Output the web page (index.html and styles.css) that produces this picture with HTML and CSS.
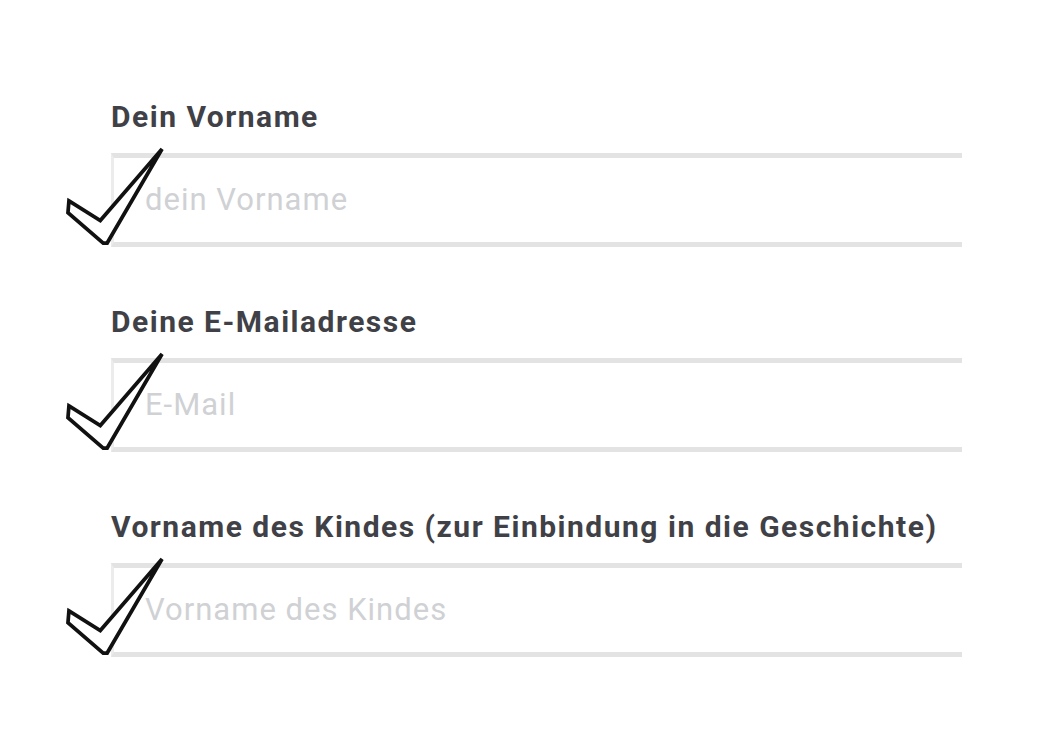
FILE: index.html
```html
<!DOCTYPE html>
<html lang="de">
<head>
<meta charset="utf-8">
<title>Anmeldung</title>
<link rel="stylesheet" href="styles.css">
</head>
<body>
<form class="signup">
  <div class="field">
    <label class="field-label" for="vorname">Dein Vorname</label>
    <div class="input-wrap">
      <input class="field-input" id="vorname" type="text" placeholder="dein Vorname">
      <svg class="check" viewBox="0 0 100 100" aria-hidden="true">
        <path d="M3 54 L35 74 L98 1 L42 97 L38 97 L2 66 Z" />
      </svg>
    </div>
  </div>
  <div class="field">
    <label class="field-label" for="email">Deine E-Mailadresse</label>
    <div class="input-wrap">
      <input class="field-input" id="email" type="email" placeholder="E-Mail">
      <svg class="check" viewBox="0 0 100 100" aria-hidden="true">
        <path d="M3 54 L35 74 L98 1 L42 97 L38 97 L2 66 Z" />
      </svg>
    </div>
  </div>
  <div class="field">
    <label class="field-label" for="kind">Vorname des Kindes (zur Einbindung in die Geschichte)</label>
    <div class="input-wrap">
      <input class="field-input" id="kind" type="text" placeholder="Vorname des Kindes">
      <svg class="check" viewBox="0 0 100 100" aria-hidden="true">
        <path d="M3 54 L35 74 L98 1 L42 97 L38 97 L2 66 Z" />
      </svg>
    </div>
  </div>
</form>
</body>
</html>
```

FILE: styles.css
```css
html, body {
  margin: 0;
  background: #ffffff;
}

.signup {
  display: flex;
  flex-direction: column;
  gap: 57px;
  padding: 99px 0 0 111px;
  font-family: Roboto, "Liberation Sans", Arial, sans-serif;
}

.field {
  display: flex;
  flex-direction: column;
  gap: 18px;
  width: 851px;
}

.field-label {
  display: block;
  height: 36px;
  line-height: 36px;
  font-size: 30px;
  font-weight: 700;
  letter-spacing: 1.5px;
  color: #3f4147;
  white-space: nowrap;
}

.input-wrap {
  position: relative;
}

.field-input {
  display: block;
  box-sizing: border-box;
  width: 100%;
  height: 94px;
  margin: 0;
  padding: 0 0 2px 31px;
  border: 0;
  border-top: 5px solid #e3e3e3;
  border-bottom: 5px solid #e3e3e3;
  border-left: 3px solid #ececec;
  background: #ffffff;
  font-family: Roboto, "Liberation Sans", Arial, sans-serif;
  font-size: 31px;
  letter-spacing: 1px;
  color: #333;
  outline: none;
}

.field-input::placeholder {
  color: #cfd1d4;
}

/* hand-drawn style tick over the left edge of each field */
.check {
  position: absolute;
  left: -46px;
  top: -5px;
  width: 100px;
  height: 98px;
  overflow: visible;
}

.check path {
  fill: #ffffff;
  stroke: #111111;
  stroke-width: 3.8;
  stroke-linejoin: miter;
}
```
